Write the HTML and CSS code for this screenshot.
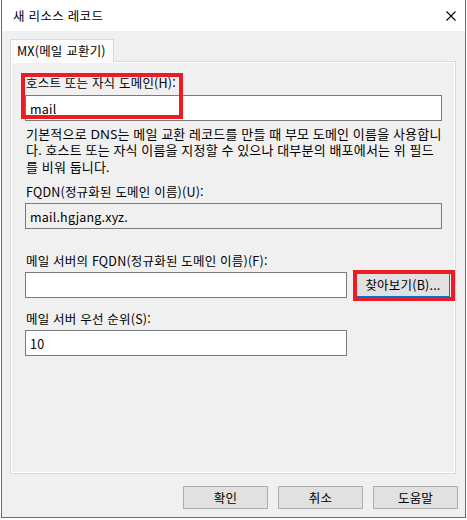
FILE: index.html
```html
<!DOCTYPE html>
<html lang="ko">
<head>
<meta charset="utf-8">
<title>새 리소스 레코드</title>
<link rel="stylesheet" href="styles.css">
</head>
<body>
<div class="window">
  <div class="titlebar">
    <span class="title">새 리소스 레코드</span>
    <svg class="close" width="10" height="10" viewBox="0 0 10 10"><path d="M0.5 0.5 L9.5 9.5 M9.5 0.5 L0.5 9.5" stroke="#000" stroke-width="1.1" fill="none"/></svg>
  </div>
  <div class="client">
    <div class="tabs"><div class="tab">MX(메일 교환기)</div></div>
    <div class="panel">
      <div class="label label-first">호스트 또는 자식 도메인(H):</div>
      <input class="field wide" type="text" value="mail">
      <div class="desc">기본적으로 DNS는 메일 교환 레코드를 만들 때 부모 도메인 이름을 사용합니<br>다. 호스트 또는 자식 이름을 지정할 수 있으나 대부분의 배포에서는 위 필드<br>를 비워 둡니다.</div>
      <div class="label label-fqdn">FQDN(정규화된 도메인 이름)(U):</div>
      <input class="field wide readonly" type="text" value="mail.hgjang.xyz." readonly>
      <div class="label label-server">메일 서버의 FQDN(정규화된 도메인 이름)(F):</div>
      <div class="row">
        <input class="field short" type="text" value="">
        <button class="btn browse" type="button">찾아보기(B)...</button>
      </div>
      <div class="label label-prio">메일 서버 우선 순위(S):</div>
      <input class="field short" type="text" value="10">
    </div>
    <div class="buttons">
      <button class="btn dlg" type="button">확인</button>
      <button class="btn dlg" type="button">취소</button>
      <button class="btn dlg" type="button">도움말</button>
    </div>
  </div>
  <div class="mark mark-host"></div>
  <div class="mark mark-browse"></div>
</div>
</body>
</html>
```
FILE: styles.css
```css
* { box-sizing: border-box; }
html, body { margin: 0; padding: 0; background: #ffffff; }
body {
  font-family: "Noto Sans CJK KR", "Noto Sans", sans-serif;
  font-size: 12.5px;
  letter-spacing: 0.2px;
  color: #000;
}
.window {
  position: relative;
  margin-left: 1px;
  width: 465px;
  height: 518px;
  border: 1px solid #6c6c6c;
  border-top: none;
  background: #f0f0f0;
}
.titlebar {
  height: 31px;
  background: #ffffff;
  display: flex;
  align-items: center;
  padding: 0 9px 0 11px;
}
.title { line-height: 16px; letter-spacing: 0.3px; }
.close { margin-left: auto; display: block; }
.client {
  height: 486px;
  padding: 8px 0 0 8px;
  background: #f0f0f0;
}
.tabs { display: flex; }
.tab {
  position: relative;
  width: 104px;
  height: 23px;
  margin-bottom: -1px;
  border: 1px solid #d9d9d9;
  border-bottom: none;
  background: #fbfbfb;
  padding-left: 6px;
  line-height: 22px;
}
.panel {
  width: 446px;
  height: 413px;
  border: 1px solid #d9d9d9;
  box-shadow: inset 0 0 0 1px #ffffff;
  padding: 13px 0 0 14px;
  background: #f0f0f0;
}
.label { line-height: 16px; margin-bottom: 4px; padding-left: 1px; }
.label-fqdn { margin-top: 9px; margin-bottom: 3px; }
.label-server { margin-top: 24px; margin-bottom: 3px; }
.label-prio { margin-top: 13px; margin-bottom: 3px; }
.field {
  display: block;
  height: 26px;
  border: 1px solid #7a7a7a;
  background: #ffffff;
  padding: 0 4px;
  font: inherit;
  letter-spacing: inherit;
  color: #000;
  outline: none;
  margin: 0;
}
.wide { width: 417px; }
.short { width: 322px; }
.readonly { background: #f0f0f0; }
.desc {
  font-family: "Noto Sans", "Noto Sans CJK KR", sans-serif;
  font-size: 13px;
  margin-top: 5px;
  line-height: 16.4px;
  white-space: nowrap;
  padding-left: 1px;
}
.row { display: flex; align-items: flex-start; gap: 9px; }
.btn {
  font: inherit;
  letter-spacing: inherit;
  color: #000;
  background: #e1e1e1;
  border: 1px solid #adadad;
  padding: 0;
  margin: 0;
  line-height: 16px;
}
.browse {
  width: 94px;
  height: 25px;
  border-color: #0078d7;
}
.buttons {
  display: flex;
  justify-content: flex-end;
  gap: 10px;
  margin-top: 12px;
  padding-right: 7px;
}
.dlg { width: 85px; height: 23px; }
.mark {
  position: absolute;
  border: 4px solid #ed1c24;
}
.mark-host { left: 19px; top: 73px; width: 162px; height: 46px; }
.mark-browse { left: 351px; top: 270px; width: 102px; height: 31px; }
```
